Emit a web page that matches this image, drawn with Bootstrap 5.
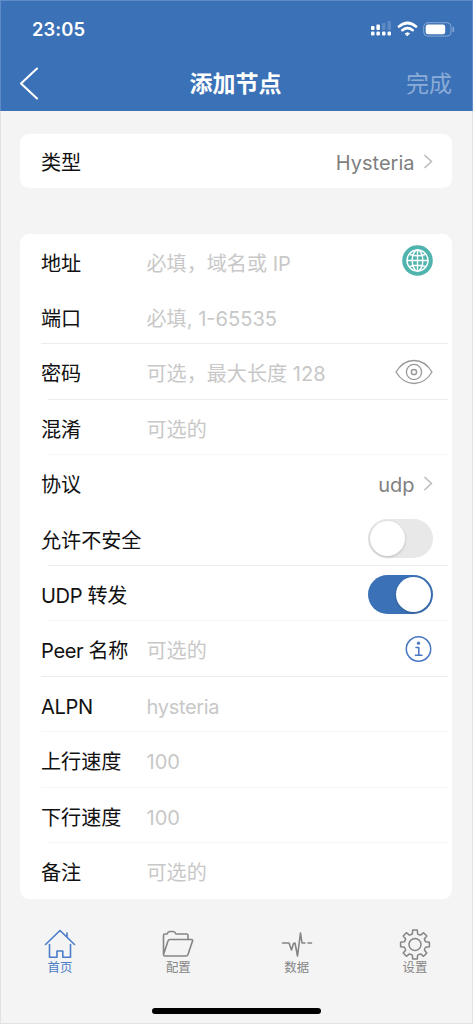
<!DOCTYPE html>
<html lang="zh-CN">
<head>
<meta charset="utf-8">
<meta name="viewport" content="width=device-width, initial-scale=1">
<title>添加节点</title>
<link href="https://cdn.jsdelivr.net/npm/bootstrap@5.3.0/dist/css/bootstrap.min.css" rel="stylesheet">
<style>
:root{--brand:#3b71b6}
body{background:#f4f4f4;font-family:Inter,"Noto Sans CJK SC",sans-serif;color:#111;overflow:hidden}
.phone{height:1024px;border:1px solid #e2e2e2;border-top:0;padding:0}
.topbar{height:111px;background:var(--brand);color:#fff;margin:0 -1px;border:1px solid #5e8cc7;border-bottom:0}
.status{height:56px;padding:0 17px 0 31px}
.clock{font-size:18.4px;font-weight:600;line-height:1;letter-spacing:.1px}
.titlebar{height:54px;padding:0 20px 0 18px}
.titlebar>*{flex:1 1 0}
.title{font-size:23px;font-weight:700;line-height:1;white-space:nowrap;font-family:"Noto Sans CJK SC",sans-serif;padding-bottom:4px}
.done{font-size:23px;line-height:1;color:#8bacd6}
.panel{background:#fff;border-radius:9px;margin:0 20px 0 19px;font-size:20.1px;line-height:1;white-space:nowrap}
.field{height:55.4px;padding:0 19.500px 0 21px;background-repeat:no-repeat}
.type-field{height:54px}
.sep,.sep-soft{background-image:linear-gradient(var(--ln),var(--ln));background-size:calc(100% - var(--in) - 4px) 1.4px;background-position:right 4px bottom 0}
.sep{--ln:#ececec;--in:21px}
.sep-soft{--ln:#f6f6f6;--in:21px}
.inset{--in:28px}
.name,.hint{padding-top:4px}
.val{padding-top:3px}
.name{min-width:105.500px;flex:none}
.latin{letter-spacing:-.35px}
.hint{color:#c8c8c8;font-weight:400}
.val{color:#808080;font-size:20px}
.switch{width:65px;height:39px;border-radius:20px;background:#e8e8e8;padding:2px}
.switch i{width:35px;height:35px;border-radius:50%;background:#fff;box-shadow:0 1px 3px #0003}
.switch.on{background:var(--brand)}
.tabs{margin-top:28px;padding:0 27px 0 29px}
.tab{width:60px;color:#858585;font-size:12.4px;line-height:13px}
.tab.current{color:#4a7cc7}
.homebar{width:169px;height:6px;border-radius:3px;background:#000;margin-top:34px}
.info-mark{color:#4676c3}
svg{display:block;flex:none;fill:none;stroke:currentColor;stroke-linecap:round;stroke-linejoin:round}
</style>
</head>
<body>
<main class="phone container-fluid">
  <header class="topbar">
    <div class="status d-flex justify-content-between align-items-center">
      <span class="clock">23:05</span>
      <div class="d-flex align-items-center">
        <svg width="22" height="16" viewBox="0 0 22 16"><g fill="#fff" stroke="none"><rect x="0" y="10.500" width="3.500" height="4" rx="1.200"/><rect x="5.400" y="10.500" width="3.500" height="4" rx="1.200"/><rect x="11" y="10.500" width="3.500" height="4" rx="1.200"/><rect x="16.500" y="10.500" width="3.500" height="4" rx="1.200"/><rect x="0" y="5" width="3.500" height="4" rx="1"/><rect x="5.400" y="3.500" width="3.500" height="5.500" rx="1"/><rect x="11" y="2" width="3.500" height="7" rx="1" opacity=".18"/><rect x="16.500" y="0" width="3.500" height="9" rx="1" opacity=".18"/></g></svg>
        <svg class="ms-1" width="21" height="16" viewBox="0 0 21 16"><path d="M2 5.500Q10.500-1.500 19 5.500" stroke-width="2.700"/><path d="M5.300 9.200Q10.500 5 15.700 9.200" stroke-width="2.600"/><path d="M8.400 12.600Q10.500 10.800 12.600 12.600L10.500 14.500Z" fill="#fff" stroke-width="1"/></svg>
        <svg style="margin-left:5px" width="32" height="15" viewBox="0 0 32 15"><rect x=".7" y=".7" width="27.300" height="13.400" rx="4" stroke="#86a8d6" stroke-width="1"/><rect x="2.700" y="2.600" width="19.500" height="9.700" rx="2.300" fill="#fff" stroke="none"/><path d="M30.300 5.500v4" stroke="#86a8d6" stroke-width="1.500"/></svg>
      </div>
    </div>
    <div class="titlebar d-flex align-items-center">
      <div><svg width="20" height="34" viewBox="0 0 20 34"><path d="M18 1.500L2 16.500L18 31.500" stroke-width="2.100"/></svg></div>
      <div class="title text-center">添加节点</div>
      <div class="done text-end">完成</div>
    </div>
  </header>

  <section class="panel" style="margin-top:23px">
    <div class="field type-field d-flex align-items-center"><span class="name">类型</span><span class="val ms-auto">Hysteria</span><svg style="margin-left:9px" width="9" height="15" viewBox="0 0 9 15"><path d="M1 1.500L7.500 7.500L1 13.500" stroke="#bdbdbd" stroke-width="1.700"/></svg></div>
  </section>

  <section class="panel" style="margin-top:46px">
    <div class="field d-flex align-items-center"><span class="name">地址</span><span class="hint">必填，域名或 IP</span>
      <svg class="ms-auto" width="31" height="33" viewBox="0 0 31 33"><circle cx="15.500" cy="15.500" r="15.300" fill="#4fb3ae" stroke="none"/><g stroke="#fff" stroke-width="1.400"><circle cx="15.500" cy="15.500" r="10.500"/><ellipse cx="15.500" cy="15.500" rx="5.300" ry="10.500"/><path d="M15.500 5v21M5 15.500h21M8 9.500Q15.500 12 23 9.500M8 21.500Q15.500 19 23 21.500"/></g></svg></div>
    <div class="field sep d-flex align-items-center"><span class="name">端口</span><span class="hint">必填, 1-65535</span></div>
    <div class="field sep inset d-flex align-items-center"><span class="name">密码</span><span class="hint">可选，最大长度 128</span>
      <svg class="ms-auto" width="38" height="26" viewBox="0 0 38 26"><g stroke="#999" stroke-width="1.300"><path d="M1 13Q8 1.500 19 1.500T37 13Q30 24.500 19 24.500T1 13Z"/><circle cx="19" cy="13" r="7.600"/><circle cx="19" cy="13" r="2.600" stroke-width="1.500"/></g></svg></div>
    <div class="field sep-soft inset d-flex align-items-center"><span class="name">混淆</span><span class="hint">可选的</span></div>
    <div class="field d-flex align-items-center"><span class="name">协议</span><span class="val ms-auto">udp</span><svg style="margin-left:9px" width="9" height="15" viewBox="0 0 9 15"><path d="M1 1.500L7.500 7.500L1 13.500" stroke="#bdbdbd" stroke-width="1.700"/></svg></div>
    <div class="field sep inset d-flex align-items-center"><span class="name">允许不安全</span><span class="switch d-flex ms-auto"><i></i></span></div>
    <div class="field sep-soft inset d-flex align-items-center"><span class="name latin">UDP 转发</span><span class="switch on d-flex justify-content-end ms-auto"><i></i></span></div>
    <div class="field sep d-flex align-items-center"><span class="name latin">Peer 名称</span><span class="hint">可选的</span>
      <svg class="info-mark ms-auto" width="28" height="28" viewBox="0 0 28 28"><circle cx="13.500" cy="14" r="12.200" stroke-width="1.500"/><circle cx="13.500" cy="8.200" r="1.600" fill="currentColor" stroke="none"/><path d="M11 12.400H13.800V20.200M10.400 20.200H17" stroke-width="1.500"/></svg></div>
    <div class="field sep-soft d-flex align-items-center"><span class="name latin">ALPN</span><span class="hint latin">hysteria</span></div>
    <div class="field sep-soft d-flex align-items-center"><span class="name">上行速度</span><span class="hint">100</span></div>
    <div class="field sep-soft inset d-flex align-items-center"><span class="name">下行速度</span><span class="hint">100</span></div>
    <div class="field d-flex align-items-center"><span class="name">备注</span><span class="hint">可选的</span></div>
  </section>

  <nav class="tabs d-flex justify-content-between">
    <div class="tab current d-flex flex-column align-items-center"><svg width="32" height="34" viewBox="0 0 32 34"><path d="M1.500 17.500L16 3.500L30.500 17.500M23 10V6M5.500 17.500V30.300H13V24H18.800V30.300H26.500V17.500" stroke-width="1.600"/></svg>首页</div>
    <div class="tab d-flex flex-column align-items-center"><svg width="32" height="34" viewBox="0 -2 32 34"><path d="M1.500 25.500V6.500Q1.500 5 3 5H5Q6 2.500 8 2.500H11Q13 2.500 14 5H24.500Q26 5 26 6.500V10.500M1.500 25.500L6 12Q6.500 10.500 8 10.500H29.500Q31 10.500 30.500 12L26 25.500Q25.500 27 24 27H3Q1.500 27 1.500 25.500" stroke-width="1.600"/></svg>配置</div>
    <div class="tab d-flex flex-column align-items-center"><svg width="32" height="34" viewBox="0 -1 32 34"><path d="M1.500 15H8L10.500 22L12.500 15.500L14 15L16.500 28L19.500 5L21 15H24M27 15H30.500" stroke-width="1.600"/></svg>数据</div>
    <div class="tab d-flex flex-column align-items-center"><svg width="32" height="34" viewBox="-16 -17.500 32 34"><path d="M-2.660-10.670L-2.280-14.420H2.280L2.660-10.670Q4.200-9.500 5.660-9.430L8.580-11.810L11.810-8.580L9.430-5.660Q9.500-4.200 10.670-2.660L14.420-2.280V2.280L10.670 2.660Q9.500 4.200 9.430 5.660L11.810 8.580L8.580 11.810L5.660 9.430Q4.200 9.500 2.660 10.670L2.280 14.420H-2.280L-2.660 10.670Q-4.200 9.500-5.660 9.430L-8.580 11.810L-11.810 8.580L-9.430 5.660Q-9.500 4.200-10.670 2.660L-14.420 2.280V-2.280L-10.670-2.660Q-9.500-4.200-9.430-5.660L-11.810-8.580L-8.580-11.810L-5.660-9.430Q-4.200-9.500-2.660-10.670Z" stroke-width="1.500"/><circle r="6" stroke-width="1.500"/></svg>设置</div>
  </nav>
  <div class="homebar mx-auto"></div>
</main>
<script src="https://cdn.jsdelivr.net/npm/bootstrap@5.3.0/dist/js/bootstrap.bundle.min.js"></script>
</body>
</html>
